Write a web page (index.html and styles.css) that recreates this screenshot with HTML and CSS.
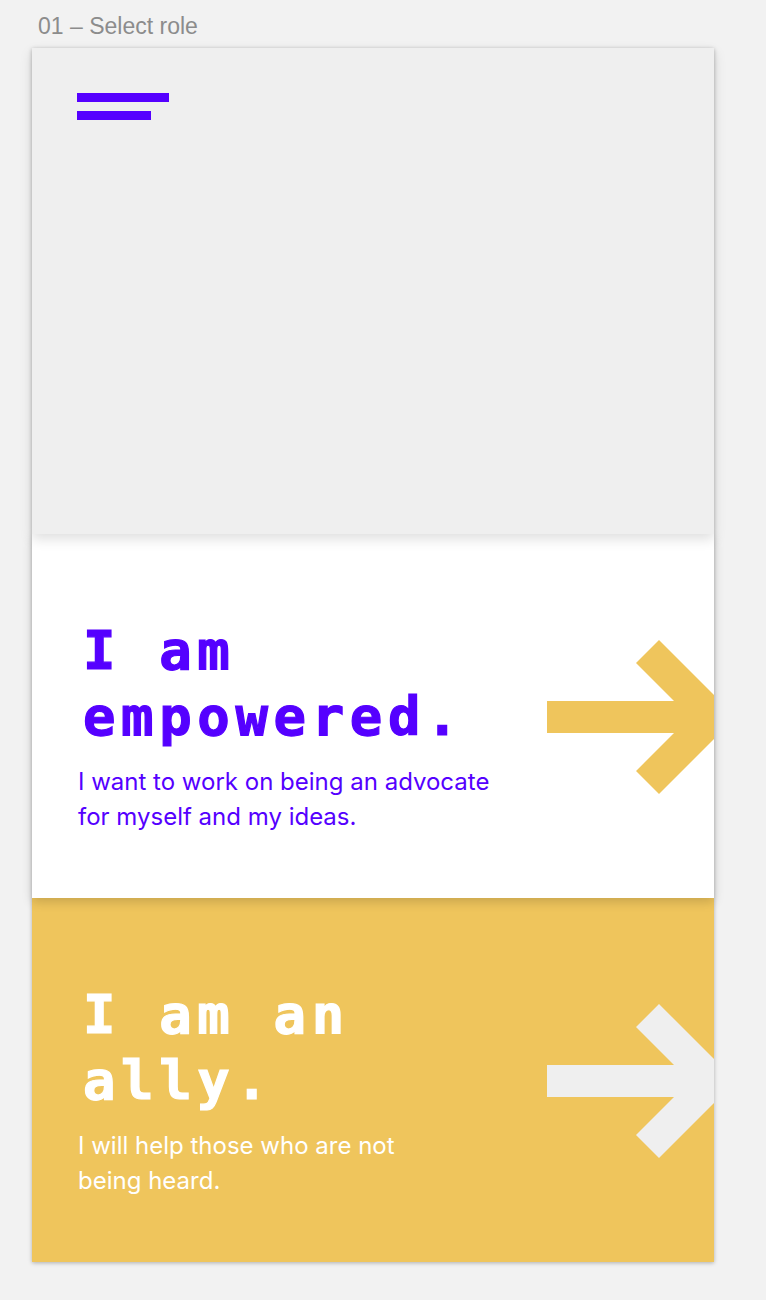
FILE: index.html
```html
<!DOCTYPE html>
<html lang="en">
<head>
<meta charset="utf-8">
<title>01 – Select role</title>
<link rel="stylesheet" href="styles.css">
</head>
<body>
  <div class="label">01 – Select role</div>
  <main class="artboard">
    <section class="hero">
      <div class="menu">
        <span class="menu-bar menu-bar-long"></span>
        <span class="menu-bar menu-bar-short"></span>
      </div>
    </section>
    <section class="card card-empowered">
      <div class="card-text">
        <h2 class="card-title">I am<br>empowered.</h2>
        <p class="card-desc">I want to work on being an advocate<br>for myself and my ideas.</p>
      </div>
      <svg class="arrow" width="189" height="154" viewBox="0 0 189 154" aria-hidden="true">
        <polygon points="0,61 127,61 89,23 112,0 189,77 112,154 89,131 127,93 0,93"/>
      </svg>
    </section>
    <section class="card card-ally">
      <div class="card-text">
        <h2 class="card-title">I am an<br>ally.</h2>
        <p class="card-desc">I will help those who are not<br>being heard.</p>
      </div>
      <svg class="arrow" width="189" height="154" viewBox="0 0 189 154" aria-hidden="true">
        <polygon points="0,61 127,61 89,23 112,0 189,77 112,154 89,131 127,93 0,93"/>
      </svg>
    </section>
  </main>
</body>
</html>
```

FILE: styles.css
```css
html, body {
  margin: 0;
  padding: 0;
}

body {
  background: #f2f2f2;
  padding-top: 13px;
  padding-bottom: 38px;
}

.label {
  margin-left: 38px;
  font-family: "Liberation Sans", Arial, sans-serif;
  font-size: 23px;
  line-height: 26px;
  color: #8c8c8c;
  margin-bottom: 9px;
}

.artboard {
  margin-left: 32px;
  width: 682px;
  display: flex;
  flex-direction: column;
  box-shadow: 0 1px 4px rgba(0, 0, 0, 0.28);
}

.hero {
  height: 486px;
  background: #efefef;
  padding: 45px 0 0 45px;
  box-sizing: border-box;
  position: relative;
  z-index: 3;
  box-shadow: 0 5px 12px rgba(0, 0, 0, 0.13);
}

.menu {
  display: flex;
  flex-direction: column;
  gap: 9px;
}

.menu-bar {
  display: block;
  height: 9px;
  background: #5500ff;
}

.menu-bar-long { width: 92px; }
.menu-bar-short { width: 74px; }

.card {
  height: 364px;
  box-sizing: border-box;
  display: flex;
  justify-content: space-between;
  align-items: flex-start;
  padding-left: 46px;
  overflow: hidden;
  position: relative;
}

.card-empowered {
  background: #ffffff;
  z-index: 2;
  box-shadow: 0 4px 10px rgba(0, 0, 0, 0.16);
}

.card-ally {
  background: #efc55c;
  z-index: 1;
}

.card-text {
  padding-top: 84px;
}

.card-title {
  margin: 0;
  margin-left: 5px;
  font-family: "DejaVu Sans Mono", "Liberation Mono", monospace;
  font-weight: bold;
  font-size: 54px;
  line-height: 66px;
  letter-spacing: 5.6px;
  -webkit-text-stroke: 1.2px currentColor;
}

.card-desc {
  margin: 14px 0 0;
  font-family: Inter, "Noto Sans", sans-serif;
  font-size: 24px;
  line-height: 35px;
}

.card-empowered .card-title,
.card-empowered .card-desc {
  color: #5500ff;
}

.card-ally .card-title,
.card-ally .card-desc {
  color: #ffffff;
}

.arrow {
  flex: none;
  align-self: center;
  margin-top: 2px;
  margin-right: -22px;
}

.card-empowered .arrow { fill: #efc55c; }
.card-ally .arrow { fill: #efefef; }
```
